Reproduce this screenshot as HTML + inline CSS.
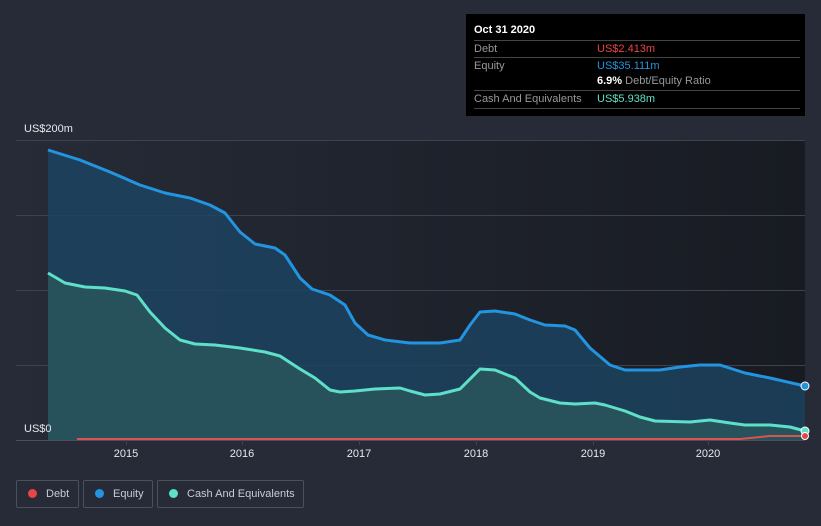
<!DOCTYPE html>
<html><head><meta charset="utf-8"><style>
body{margin:0;width:821px;height:526px;background:#262b37;font-family:"Liberation Sans",sans-serif;overflow:hidden;position:relative}
.tt{position:absolute;left:466px;top:14px;width:339px;height:102px;background:#000;color:#fff;font-size:11px}
.tt div{position:absolute;left:8px;right:5px;height:17px;line-height:17px}
.tt .l{color:#999}
.tt .v{position:absolute;left:123px;top:0}
.leg{position:absolute;top:480px;border:1px solid #4a505c;border-radius:2px;color:#c8ccd4;font-size:11px;line-height:26px;box-sizing:border-box;height:28px;white-space:nowrap}
.dot{display:inline-block;width:9px;height:9px;border-radius:50%;margin:0 9px 0 11px;vertical-align:-1px}
</style></head><body>
<svg width="821" height="526" style="position:absolute;left:0;top:0">
<defs><linearGradient id="bg" x1="0" x2="1" y1="0" y2="0"><stop offset="0" stop-color="#262b37"/><stop offset="1" stop-color="#181b22"/></linearGradient></defs>
<rect x="16" y="140" width="789" height="300" fill="url(#bg)"/>
<g stroke="#3d424d" stroke-width="1">
<line x1="16" x2="805" y1="140.5" y2="140.5"/><line x1="16" x2="805" y1="215.5" y2="215.5"/><line x1="16" x2="805" y1="290.5" y2="290.5"/><line x1="16" x2="805" y1="365.5" y2="365.5"/><line x1="16" x2="805" y1="440.5" y2="440.5" stroke="#4a4f5a"/>
<line x1="126.5" x2="126.5" y1="440" y2="445"/><line x1="242.5" x2="242.5" y1="440" y2="445"/><line x1="359.5" x2="359.5" y1="440" y2="445"/><line x1="476.5" x2="476.5" y1="440" y2="445"/><line x1="593.5" x2="593.5" y1="440" y2="445"/><line x1="708.5" x2="708.5" y1="440" y2="445"/>
</g>
<path d="M48,150 L80,160 110,172 140,185 165,193 190,198 210,205 225,213 240,232 255,244 275,248 285,255 300,278 312,289 330,295 345,305 355,323 368,335 385,340 410,343 440,343 460,340 470,325 480,312 495,311 515,314 530,320 545,325 565,326 575,330 590,348 610,365 625,370 660,370 680,367 700,365 720,365 745,373 770,378 805,386 L805,440 L48,440Z" fill="#1d4563" fill-opacity="0.8"/>
<path d="M48,273 L65,283 85,287 105,288 125,291 137,295 150,312 165,328 180,340 195,344 215,345 240,348 265,352 280,356 300,369 315,378 330,390 340,392 355,391 375,389 400,388 410,391 425,395 440,394 460,389 470,379 480,369 495,370 515,378 530,392 540,398 560,403 575,404 595,403 605,405 625,411 640,417 655,421 690,422 710,420 730,423 745,425 770,425 790,427 805,431 L805,440 L48,440Z" fill="#2b5a5e" fill-opacity="0.75"/>
<path d="M48,150 L80,160 110,172 140,185 165,193 190,198 210,205 225,213 240,232 255,244 275,248 285,255 300,278 312,289 330,295 345,305 355,323 368,335 385,340 410,343 440,343 460,340 470,325 480,312 495,311 515,314 530,320 545,325 565,326 575,330 590,348 610,365 625,370 660,370 680,367 700,365 720,365 745,373 770,378 805,386" fill="none" stroke="#2394df" stroke-width="3" stroke-linejoin="round"/>
<path d="M48,273 L65,283 85,287 105,288 125,291 137,295 150,312 165,328 180,340 195,344 215,345 240,348 265,352 280,356 300,369 315,378 330,390 340,392 355,391 375,389 400,388 410,391 425,395 440,394 460,389 470,379 480,369 495,370 515,378 530,392 540,398 560,403 575,404 595,403 605,405 625,411 640,417 655,421 690,422 710,420 730,423 745,425 770,425 790,427 805,431" fill="none" stroke="#5ee0c8" stroke-width="3" stroke-linejoin="round"/>
<path d="M77,439 L740,439 770,436 805,436" fill="none" stroke="#d9534f" stroke-width="2"/>
<circle cx="805" cy="386" r="4" fill="#2394df" stroke="#fff" stroke-width="1"/>
<circle cx="805" cy="431" r="4" fill="#5ee0c8" stroke="#fff" stroke-width="1"/>
<circle cx="805" cy="436" r="3.5" fill="#e04848" stroke="#fff" stroke-width="1"/>
<g fill="#e6e8ec" font-size="11" font-family="Liberation Sans,sans-serif" text-anchor="middle">
<text x="126" y="457">2015</text><text x="242" y="457">2016</text><text x="359" y="457">2017</text><text x="476" y="457">2018</text><text x="593" y="457">2019</text><text x="708" y="457">2020</text>
<text x="24" y="132" text-anchor="start">US$200m</text><text x="24" y="432" text-anchor="start">US$0</text>
</g>
</svg>
<div class="tt">
<div style="top:8px;font-weight:bold;color:#fff">Oct 31 2020</div>
<div style="top:26px;border-top:1px solid #444" class="l">Debt<span class="v" style="color:#e84545">US$2.413m</span></div>
<div style="top:43px;border-top:1px solid #444" class="l">Equity<span class="v" style="color:#2394df">US$35.111m</span></div>
<div style="top:59px" class="l"><span class="v"><b style="color:#fff">6.9%</b> Debt/Equity Ratio</span></div>
<div style="top:76px;border-top:1px solid #444;border-bottom:1px solid #444" class="l">Cash And Equivalents<span class="v" style="color:#5ee0c8">US$5.938m</span></div>
</div>
<div class="leg" style="left:16px;width:63px"><span class="dot" style="background:#e84545"></span>Debt</div>
<div class="leg" style="left:83px;width:70px"><span class="dot" style="background:#2394df"></span>Equity</div>
<div class="leg" style="left:157px;width:147px"><span class="dot" style="background:#5ee0c8"></span>Cash And Equivalents</div>
</body></html>
